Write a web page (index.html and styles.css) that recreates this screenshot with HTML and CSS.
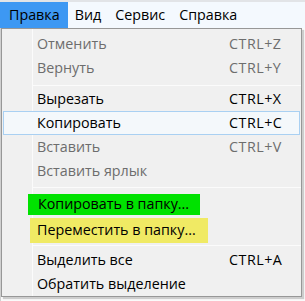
FILE: index.html
```html
<!DOCTYPE html>
<html lang="ru">
<head>
<meta charset="utf-8">
<link rel="stylesheet" href="styles.css">
</head>
<body>
<div class="window">
  <nav class="menubar">
    <span class="mitem open">Правка</span>
    <span class="mitem">Вид</span>
    <span class="mitem">Сервис</span>
    <span class="mitem">Справка</span>
  </nav>
  <div class="content"></div>
  <div class="popup">
    <div class="row disabled"><span class="label">Отменить</span><span class="key">CTRL+Z</span></div>
    <div class="row disabled"><span class="label">Вернуть</span><span class="key">CTRL+Y</span></div>
    <div class="sep"></div>
    <div class="row"><span class="label">Вырезать</span><span class="key">CTRL+X</span></div>
    <div class="row hover"><span class="label">Копировать</span><span class="key">CTRL+C</span></div>
    <div class="row disabled"><span class="label">Вставить</span><span class="key">CTRL+V</span></div>
    <div class="row disabled"><span class="label">Вставить ярлык</span></div>
    <div class="sep sep2"></div>
    <div class="row green-row"><span class="label mark green">Копировать в папку...</span></div>
    <div class="row yellow-row"><span class="label mark yellow">Переместить в папку...</span></div>
    <div class="sep sep3"></div>
    <div class="row"><span class="label">Выделить все</span><span class="key">CTRL+A</span></div>
    <div class="row"><span class="label">Обратить выделение</span></div>
  </div>
</div>
</body>
</html>
```
FILE: styles.css
```css
html, body {
  margin: 0;
  padding: 0;
}
body {
  width: 305px;
  height: 301px;
  overflow: hidden;
  background: #ffffff;
  font-family: "Open Sans", "Noto Sans", "DejaVu Sans", sans-serif;
  font-size: 14.3px;
  color: #000;
}
.window {
  position: relative;
  width: 305px;
  height: 301px;
}
.menubar {
  display: flex;
  height: 26px;
  border-top: 2px solid #e2e4e7;
  background: #f4f9fe;
  align-items: stretch;
}
.mitem {
  display: flex;
  align-items: center;
  padding: 0 7px;
  line-height: 1;
}
.mitem.open {
  background: #3d98f3;
  padding: 0 8px 0 9px;
}
.content {
  height: 273px;
  background: #fafafa;
  border-left: 1px solid #d0d0d0;
}
.popup {
  position: absolute;
  left: 1px;
  top: 28px;
  width: 299px;
  height: 264px;
  border: 1px solid #979797;
  padding-top: 3px;
  box-sizing: content-box;
  background:
    linear-gradient(to right, transparent 30px, #fbfbfb 30px, #fbfbfb 31px, transparent 31px),
    #f0f0f0;
  box-shadow: 2px 2px 1px rgba(0, 0, 0, 0.18);
}
.row {
  display: flex;
  align-items: center;
  height: 24px;
  padding-left: 35px;
  line-height: 1;
  white-space: nowrap;
}
.label {
  width: 192px;
  flex: none;
}
.key {
  flex: none;
  letter-spacing: 0.5px;
}
.disabled {
  color: #6d6d6d;
}
.hover {
  margin: 0 1px;
  height: 22px;
  padding-left: 33px;
  border: 1px solid #a9d0f2;
  background: #f4f8fb;
}
.sep {
  height: 7px;
  box-sizing: border-box;
  padding-top: 5px;
  margin-left: 31px;
}
.sep::before {
  content: "";
  display: block;
  height: 1px;
  background: #fbfbfb;
}
.sep2 {
  height: 8px;
  padding-top: 4px;
}
.green-row {
  height: 24px;
  align-items: flex-end;
}
.yellow-row {
  height: 28px;
  align-items: flex-end;
}
.sep3 {
  height: 5px;
  padding-top: 2px;
}
.mark {
  width: auto;
  display: flex;
  align-items: center;
}
.green {
  background: #00e200;
  height: 21px;
  margin-left: -9px;
  padding: 0 11px 0 10px;
}
.yellow {
  background: #f0ea64;
  height: 25px;
  margin-left: -7px;
  padding: 0 12px 0 7px;
}
```
